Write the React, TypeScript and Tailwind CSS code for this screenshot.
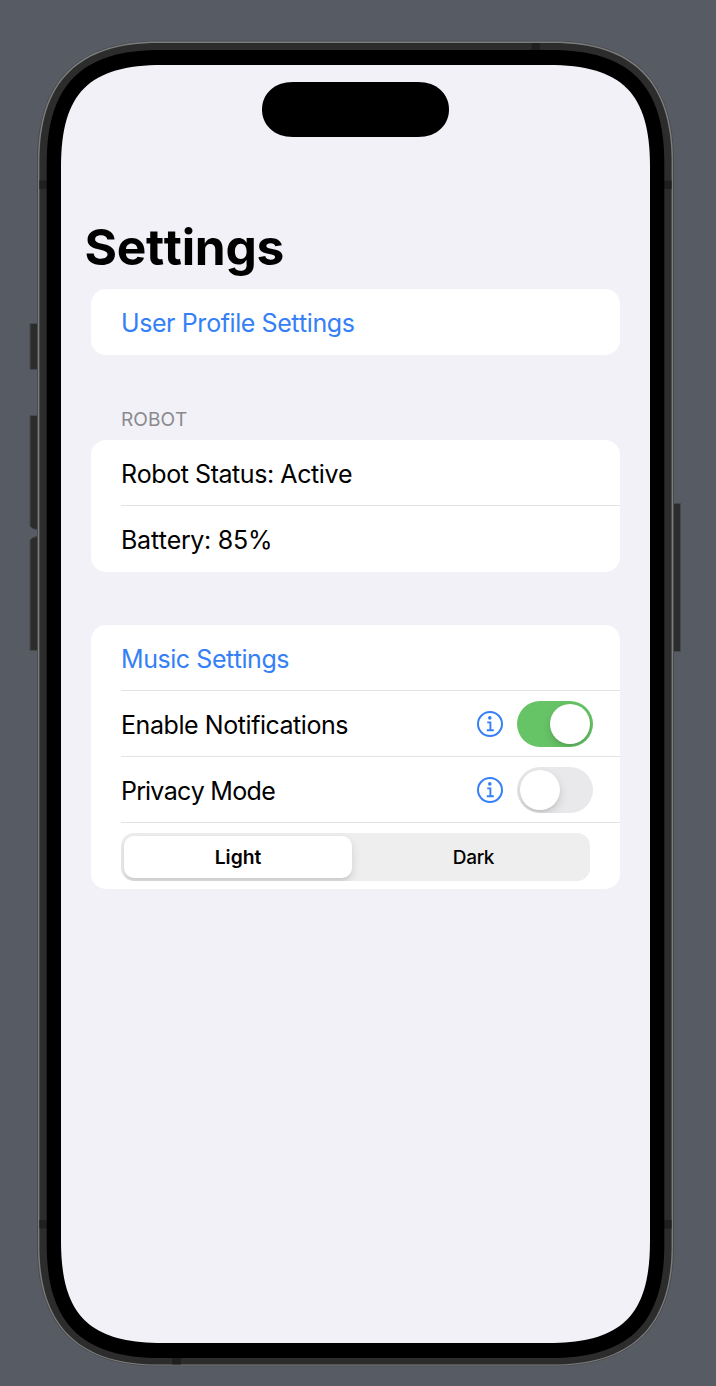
import type { ReactNode } from "react";

// Rounded rectangle whose corners ease into the straight edges:
// a is the reach of each corner, h the distance of its control points from the vertex.
function smoothRect(x: number, y: number, w: number, ht: number, a: number, h: number) {
  const X = x + w, Y = y + ht;
  return [
    `M${x + a} ${y}L${X - a} ${y}C${X - h} ${y} ${X} ${y + h} ${X} ${y + a}`,
    `L${X} ${Y - a}C${X} ${Y - h} ${X - h} ${Y} ${X - a} ${Y}`,
    `L${x + a} ${Y}C${x + h} ${Y} ${x} ${Y - h} ${x} ${Y - a}`,
    `L${x} ${y + a}C${x} ${y + h} ${x + h} ${y} ${x + a} ${y}Z`,
  ].join("");
}

function DeviceFrame() {
  return (
    <svg className="absolute inset-0" width="716" height="1386" viewBox="0 0 716 1386" aria-hidden="true">
      <g fill="#2c2c2c" stroke="#46494d" strokeWidth="1">
        <path d="M38 323.5H30V369.5H38Z" />
        <path d="M38 415.5H30V526Q31 529 38 530Z" />
        <path d="M38 536Q31 537.5 30 540V650.5H38Z" />
        <path d="M673 503.5H680.5V651.5H673Z" />
      </g>
      <path d={smoothRect(37, 40.7, 637, 1325.6, 121, 40)} fill="#484b4f" />
      <path d={smoothRect(38, 41.5, 635, 1324, 120, 39.5)} fill="#7c7c7c" />
      <path d={smoothRect(39.4, 43, 632.2, 1321.5, 119, 38.8)} fill="#2c2c2c" />
      <path
        fill="#1f1f1f"
        d="M39.4 180.5h8v8.5h-8zM664 180.5h7.6v8.5h-7.6zM39.4 1220h8v8.5h-8zM664 1220h7.6v8.5h-7.6zM531.5 43h8.5v8h-8.5zM172.3 1357h8.5v7.5h-8.5z"
      />
      <path d={smoothRect(46.7, 50, 617.6, 1308, 113, 35)} fill="#000" />
      <path d={smoothRect(61, 65, 589, 1278, 102, 27.9)} fill="#f2f1f7" />
      <path
        fill="#000"
        d="M293 82H418C437 82 449 94 449 109.5S437 137 418 137H293C274 137 262 125 262 109.5S274 82 293 82Z"
      />
    </svg>
  );
}

function InfoIcon() {
  return (
    <svg width="26" height="26" viewBox="0 0 26 26" fill="none" stroke="#357ff7" aria-hidden="true">
      <circle cx="13" cy="13" r="12" strokeWidth="2" />
      <circle cx="12.8" cy="6.9" r="1.8" fill="#357ff7" stroke="none" />
      <path d="M10.2 11.4H13.4V19.2M9.8 19.3H16.8" strokeWidth="1.9" />
    </svg>
  );
}

function Toggle({ on }: { on: boolean }) {
  return (
    <div
      className={`ml-[13.5px] flex h-[46.5px] w-[76.5px] items-center overflow-hidden rounded-full px-[3px] ${on ? "justify-end bg-[#67c466]" : "justify-start bg-[#e9e9eb]"}`}
    >
      <div className="size-[40.5px] rounded-full bg-white shadow-[0_4px_10px_rgba(0,0,0,0.14),0_2px_2px_rgba(0,0,0,0.05)]" />
    </div>
  );
}

function Card({ children, className = "" }: { children: ReactNode; className?: string }) {
  return <section className={`overflow-hidden rounded-[15px] bg-white pl-[30px] ${className}`}>{children}</section>;
}

function Row({ label, labelClass, children, last }: { label: string; labelClass: string; children?: ReactNode; last?: boolean }) {
  return (
    <div className={`flex h-[66px] items-center pr-[27px] pt-px text-[25px] leading-[30px] ${last ? "" : "border-b border-[#e3e3e5]"}`}>
      <span className={`flex-1 pt-px ${labelClass}`}>{label}</span>
      {children}
    </div>
  );
}

export default function App() {
  return (
    <div className="relative h-[1386px] w-[716px] overflow-hidden bg-[#575c64] font-['Inter',sans-serif] text-black [font-kerning:none]">
      <DeviceFrame />
      <main className="relative pl-[91px] pr-24 pt-[217px]">
        <h1 className="-ml-[6.5px] h-[72.4px] text-[49.7px] leading-[61px] font-bold tracking-[-0.34px]">Settings</h1>
        <Card>
          <Row last label="User Profile Settings" labelClass="tracking-[-0.43px] text-[#357ff7]" />
        </Card>
        <h2 className="mt-[51.6px] h-[33.1px] pl-[30px] text-[19.1px] leading-[25px] text-[#8a8a8e]">ROBOT</h2>
        <Card>
          <Row label="Robot Status: Active" labelClass="tracking-[-0.42px]" />
          <Row last label="Battery: 85%" labelClass="tracking-[-0.25px]" />
        </Card>
        <Card className="mt-[53px]">
          <Row label="Music Settings" labelClass="tracking-[-0.44px] text-[#357ff7]" />
          <Row label="Enable Notifications" labelClass="tracking-[-0.43px]">
            <InfoIcon />
            <Toggle on />
          </Row>
          <Row label="Privacy Mode" labelClass="tracking-[-0.69px]">
            <InfoIcon />
            <Toggle on={false} />
          </Row>
          <div className="flex h-[66px] items-start pt-[10px]">
            <div className="flex h-12 w-[469px] overflow-hidden rounded-[13px] bg-[#eeeeee] p-[3px] leading-6">
              <div className="flex w-[228px] items-center justify-center rounded-[10px] bg-white text-[19.3px] font-semibold shadow-[0_4px_10px_rgba(0,0,0,0.12),0_3px_1px_rgba(0,0,0,0.04)]">
                Light
              </div>
              <div className="flex flex-1 items-center justify-center pl-2 pt-0.5 text-[19px] font-medium tracking-[-0.25px]">Dark</div>
            </div>
          </div>
        </Card>
      </main>
    </div>
  );
}
